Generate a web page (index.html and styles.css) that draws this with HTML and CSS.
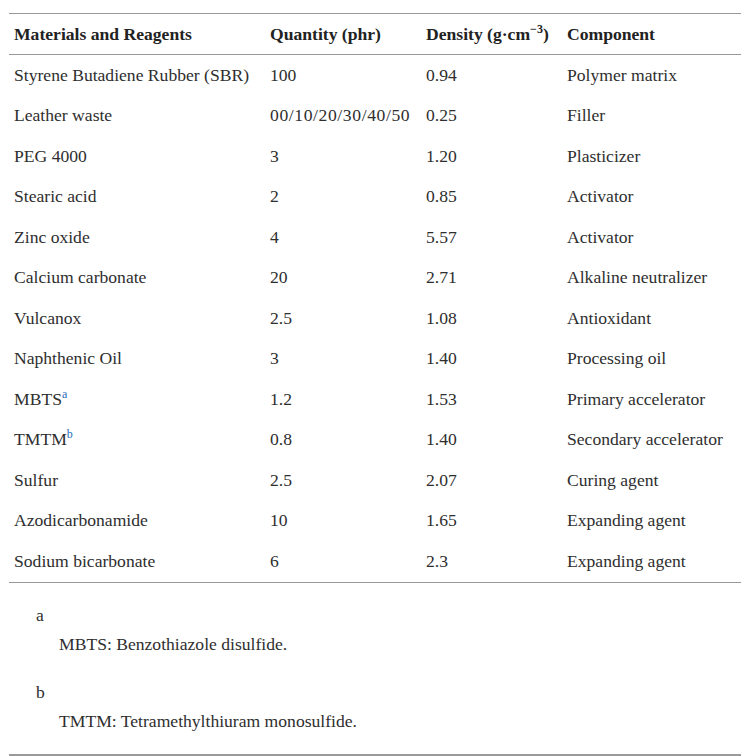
FILE: index.html
```html
<!DOCTYPE html>
<html>
<head>
<meta charset="utf-8">
<link rel="stylesheet" href="styles.css">
</head>
<body>
<div class="wrap">
<table class="tbl">
<thead>
<tr><th class="c1">Materials and Reagents</th><th class="c2">Quantity (phr)</th><th class="c3">Density (g·cm<sup class="exp">−3</sup>)</th><th class="c4">Component</th></tr>
</thead>
<tbody>
<tr><td>Styrene Butadiene Rubber (SBR)</td><td>100</td><td>0.94</td><td>Polymer matrix</td></tr>
<tr><td>Leather waste</td><td class="wide">00/10/20/30/40/50</td><td>0.25</td><td>Filler</td></tr>
<tr><td>PEG 4000</td><td>3</td><td>1.20</td><td>Plasticizer</td></tr>
<tr><td>Stearic acid</td><td>2</td><td>0.85</td><td>Activator</td></tr>
<tr><td>Zinc oxide</td><td>4</td><td>5.57</td><td>Activator</td></tr>
<tr><td>Calcium carbonate</td><td>20</td><td>2.71</td><td>Alkaline neutralizer</td></tr>
<tr><td>Vulcanox</td><td>2.5</td><td>1.08</td><td>Antioxidant</td></tr>
<tr><td>Naphthenic Oil</td><td>3</td><td>1.40</td><td>Processing oil</td></tr>
<tr><td>MBTS<sup class="ref">a</sup></td><td>1.2</td><td>1.53</td><td>Primary accelerator</td></tr>
<tr><td>TMTM<sup class="ref">b</sup></td><td>0.8</td><td>1.40</td><td>Secondary accelerator</td></tr>
<tr><td>Sulfur</td><td>2.5</td><td>2.07</td><td>Curing agent</td></tr>
<tr><td>Azodicarbonamide</td><td>10</td><td>1.65</td><td>Expanding agent</td></tr>
<tr><td>Sodium bicarbonate</td><td>6</td><td>2.3</td><td>Expanding agent</td></tr>
</tbody>
</table>
<div class="notes">
<div class="note"><div class="mark">a</div><div class="ntext">MBTS: Benzothiazole disulfide.</div></div>
<div class="note"><div class="mark">b</div><div class="ntext">TMTM: Tetramethylthiuram monosulfide.</div></div>
</div>
<div class="endrule"></div>
</div>
</body>
</html>
```
FILE: styles.css
```css
html, body { margin: 0; padding: 0; background: #fff; }
body {
  font-family: "Liberation Serif", "DejaVu Serif", serif;
  font-size: 17.6px;
  color: #2e2e2e;
}
.wrap { padding: 13px 8px 0 9px; }
.tbl {
  width: 732px;
  border-collapse: collapse;
  border-top: 1px solid #999;
  border-bottom: 1px solid #999;
}
.tbl th {
  text-align: left;
  font-weight: bold;
  color: #222;
  height: 40px;
  padding: 0 5px;
  border-bottom: 1px solid #999;
  white-space: nowrap;
}
.tbl td {
  height: 40.5px;
  padding: 0 5px;
  white-space: nowrap;
  vertical-align: middle;
}
.c1 { width: 246px; }
.c2 { width: 146px; }
.c3 { width: 131px; }
.wide { letter-spacing: 0.6px; }
.exp { font-size: 12px; line-height: 0; }
.ref { font-size: 12px; color: #2a6ebb; line-height: 0; }
.notes { padding: 22px 0 23px 27px; }
.note + .note { margin-top: 28px; }
.mark { height: 29px; line-height: 20px; }
.ntext { padding-left: 23px; line-height: 20px; }
.endrule { border-top: 3px solid #9a9a9a; }
```
